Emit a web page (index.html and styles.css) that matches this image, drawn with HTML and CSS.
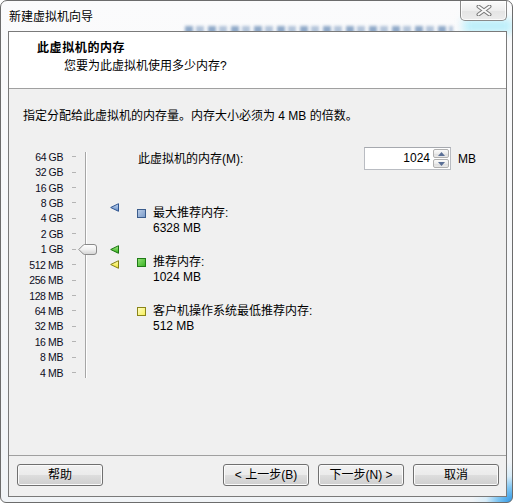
FILE: index.html
```html
<!DOCTYPE html>
<html lang="zh-CN">
<head>
<meta charset="utf-8">
<title>新建虚拟机向导</title>
<link rel="stylesheet" href="styles.css">
</head>
<body>
<div class="window">
  <div class="glass glass-text"></div>
  <div class="glass glass-glow"></div>
  <div class="titlebar">
    <span class="title">新建虚拟机向导</span>
    <button class="close" aria-label="关闭">
      <svg width="16" height="11" viewBox="0 0 16 11">
        <path d="M2.5 1.5 L13.5 9.5 M13.5 1.5 L2.5 9.5" stroke="#7b7b7b" stroke-width="4" stroke-linecap="round"/>
        <path d="M2.5 1.5 L13.5 9.5 M13.5 1.5 L2.5 9.5" stroke="#fbfbfb" stroke-width="2" stroke-linecap="round"/>
      </svg>
    </button>
  </div>
  <div class="client">
    <div class="header">
      <div class="header-title">此虚拟机的内存</div>
      <div class="header-sub">您要为此虚拟机使用多少内存?</div>
    </div>
    <div class="content">
      <p class="intro">指定分配给此虚拟机的内存量。内存大小必须为 4 MB 的倍数。</p>
      <div class="memory">
        <div class="scale">
          <div class="tick-row"><span class="tick-label">64 GB</span><span class="tick"></span></div>
          <div class="tick-row"><span class="tick-label">32 GB</span><span class="tick"></span></div>
          <div class="tick-row"><span class="tick-label">16 GB</span><span class="tick"></span></div>
          <div class="tick-row"><span class="tick-label">8 GB</span><span class="tick"></span></div>
          <div class="tick-row"><span class="tick-label">4 GB</span><span class="tick"></span></div>
          <div class="tick-row"><span class="tick-label">2 GB</span><span class="tick"></span></div>
          <div class="tick-row"><span class="tick-label">1 GB</span><span class="tick"></span></div>
          <div class="tick-row"><span class="tick-label">512 MB</span><span class="tick"></span></div>
          <div class="tick-row"><span class="tick-label">256 MB</span><span class="tick"></span></div>
          <div class="tick-row"><span class="tick-label">128 MB</span><span class="tick"></span></div>
          <div class="tick-row"><span class="tick-label">64 MB</span><span class="tick"></span></div>
          <div class="tick-row"><span class="tick-label">32 MB</span><span class="tick"></span></div>
          <div class="tick-row"><span class="tick-label">16 MB</span><span class="tick"></span></div>
          <div class="tick-row"><span class="tick-label">8 MB</span><span class="tick"></span></div>
          <div class="tick-row"><span class="tick-label">4 MB</span><span class="tick"></span></div>
        </div>
        <div class="track">
          <svg class="thumb" style="top:92px" width="19" height="11" viewBox="0 0 19 11">
            <defs>
              <linearGradient id="tg" x1="0" y1="0" x2="0" y2="1">
                <stop offset="0" stop-color="#ffffff"/>
                <stop offset="0.5" stop-color="#f0f0f0"/>
                <stop offset="1" stop-color="#d2d2d2"/>
              </linearGradient>
            </defs>
            <path d="M0.8 5.5 L5.3 1 Q5.8 0.5 6.5 0.5 H16 Q18.5 0.5 18.5 3 V8 Q18.5 10.5 16 10.5 H6.5 Q5.8 10.5 5.3 10 Z" fill="url(#tg)" stroke="#8a8a8a"/>
          </svg>
        </div>
        <div class="markers">
          <svg class="marker" style="top:56px" width="10" height="9" viewBox="0 0 10 9">
            <defs>
              <linearGradient id="mb" x1="0" y1="0" x2="0" y2="1">
                <stop offset="0" stop-color="#c9dbf3"/>
                <stop offset="1" stop-color="#5f88c4"/>
              </linearGradient>
            </defs>
            <path d="M0.7 4.5 L8.5 0.7 V8.3 Z" fill="url(#mb)" stroke="#2f5590" stroke-linejoin="round"/>
          </svg>
          <svg class="marker" style="top:98px" width="10" height="9" viewBox="0 0 10 9">
            <defs>
              <linearGradient id="mg" x1="0" y1="0" x2="0" y2="1">
                <stop offset="0" stop-color="#a8ec8a"/>
                <stop offset="1" stop-color="#2fae16"/>
              </linearGradient>
            </defs>
            <path d="M0.7 4.5 L8.5 0.7 V8.3 Z" fill="url(#mg)" stroke="#1a7410" stroke-linejoin="round"/>
          </svg>
          <svg class="marker" style="top:113px" width="10" height="9" viewBox="0 0 10 9">
            <defs>
              <linearGradient id="my" x1="0" y1="0" x2="0" y2="1">
                <stop offset="0" stop-color="#fffcb0"/>
                <stop offset="1" stop-color="#efe42c"/>
              </linearGradient>
            </defs>
            <path d="M0.7 4.5 L8.5 0.7 V8.3 Z" fill="url(#my)" stroke="#858014" stroke-linejoin="round"/>
          </svg>
        </div>
        <div class="details">
          <div class="amount-row">
            <label class="amount-label">此虚拟机的内存(M):</label>
            <div class="spinbox">
              <span class="spin-value">1024</span>
              <span class="spin-buttons">
                <span class="spin-btn">
                  <svg width="7" height="4" viewBox="0 0 7 4"><path d="M0 4 L3.5 0 L7 4 Z" fill="#5a6f96"/></svg>
                </span>
                <span class="spin-btn">
                  <svg width="7" height="4" viewBox="0 0 7 4"><path d="M0 0 L3.5 4 L7 0 Z" fill="#5a6f96"/></svg>
                </span>
              </span>
            </div>
            <span class="unit">MB</span>
          </div>
          <ul class="legend">
            <li class="legend-item"><span class="swatch swatch-max"></span><span class="legend-text">最大推荐内存:<br>6328 MB</span></li>
            <li class="legend-item"><span class="swatch swatch-rec"></span><span class="legend-text">推荐内存:<br>1024 MB</span></li>
            <li class="legend-item"><span class="swatch swatch-min"></span><span class="legend-text">客户机操作系统最低推荐内存:<br>512 MB</span></li>
          </ul>
        </div>
      </div>
    </div>
    <div class="footer">
      <button class="btn">帮助</button>
      <div class="nav-buttons">
        <button class="btn">&lt; 上一步(B)</button>
        <button class="btn">下一步(N) &gt;</button>
        <button class="btn">取消</button>
      </div>
    </div>
  </div>
</div>
</body>
</html>
```

FILE: styles.css
```css
* {
  box-sizing: border-box;
}

html, body {
  margin: 0;
  padding: 0;
  background: #ffffff;
}

body {
  width: 513px;
  height: 503px;
  overflow: hidden;
  font-family: "Liberation Sans", "Noto Sans CJK SC", sans-serif;
  font-size: 12px;
  color: #000;
}

.window {
  position: relative;
  width: 513px;
  height: 503px;
  border: 1px solid #6c6c6c;
  border-radius: 7px 7px 6px 6px;
  padding: 0 5px 5px 7px;
  display: flex;
  flex-direction: column;
  background:
    radial-gradient(circle at 100% 100%, #2f97e4 0, #7cc4f2 14px, rgba(200, 232, 250, 0.6) 26px, rgba(255,255,255,0) 40px),
    linear-gradient(#fbfbfc, #f1f4f7);
  overflow: hidden;
}

.glass {
  position: absolute;
  pointer-events: none;
}

.glass-text {
  left: 184px;
  top: 25px;
  width: 268px;
  height: 8px;
  background: repeating-linear-gradient(90deg, rgba(60, 105, 160, 0.75) 0 8px, rgba(255,255,255,0) 8px 11px, rgba(60, 105, 160, 0.5) 11px 19px, rgba(255,255,255,0) 19px 23px);
  filter: blur(1.6px);
  opacity: 0.75;
}

.glass-glow {
  left: 462px;
  top: 18px;
  width: 50px;
  height: 14px;
  background: rgba(170, 235, 250, 0.8);
  filter: blur(4px);
}

.titlebar {
  position: relative;
  height: 30px;
  display: flex;
  align-items: flex-start;
  padding-left: 1px;
}

.title {
  padding-top: 8px;
  line-height: 16px;
  font-size: 12px;
  text-shadow: 0 0 6px #ffffff, 0 0 3px #ffffff;
}

.close {
  margin-left: auto;
  margin-top: -1px;
  width: 47px;
  height: 21px;
  padding: 0;
  border: 1px solid #8a8a8a;
  border-top-color: #a4a4a4;
  border-radius: 0 0 5px 5px;
  background: linear-gradient(#fbfbfb, #eeeeee 50%, #e4e4e4 51%, #ececec);
  box-shadow: inset 0 0 0 1px rgba(255,255,255,0.8);
  display: flex;
  align-items: center;
  justify-content: center;
}

.close svg {
  display: block;
  margin-top: -1px;
}

.client {
  position: relative;
  flex: 1;
  border: 1px solid #7a7a7a;
  background: #f0f0f0;
  display: flex;
  flex-direction: column;
}

.header {
  height: 57px;
  background: #ffffff;
  border-bottom: 1px solid #a0a0a0;
  padding-top: 7px;
}

.header-title {
  font-weight: bold;
  line-height: 18px;
  padding-left: 28px;
  letter-spacing: 0.6px;
}

.header-sub {
  line-height: 18px;
  padding-left: 55px;
}

.content {
  flex: 1;
  padding: 19px 0 0 14px;
}

.intro {
  margin: 0;
  line-height: 16px;
}

.memory {
  display: flex;
  align-items: flex-start;
  margin-top: 23px;
}

.scale {
  padding-top: 2px;
  display: flex;
  flex-direction: column;
}

.tick-row {
  height: 15.43px;
  display: flex;
  align-items: center;
}

.tick-label {
  width: 40px;
  text-align: right;
  font-size: 10.5px;
  letter-spacing: -0.4px;
  line-height: 12px;
  color: #0c0c1c;
}

.tick {
  width: 4px;
  height: 1px;
  margin-left: 9px;
  background: #b4b4b4;
}

.track {
  position: relative;
  margin-left: 9px;
  margin-top: 5px;
  width: 2px;
  height: 226px;
  border-left: 1px solid #a6a6a6;
  border-right: 1px solid #ffffff;
}

.thumb {
  position: absolute;
  left: -8px;
  display: block;
}

.markers {
  position: relative;
  margin-left: 23px;
  width: 10px;
  height: 1px;
}

.marker {
  position: absolute;
  left: 0;
  display: block;
}

.details {
  margin-left: 17px;
}

.amount-row {
  display: flex;
  align-items: center;
  height: 23px;
}

.amount-label {
  width: 227px;
  padding-left: 1px;
  line-height: 16px;
  margin-top: 1px;
}

.spinbox {
  width: 87px;
  height: 23px;
  display: flex;
  border: 1px solid #b9bcc2;
  border-top-color: #a6a9af;
  background: #ffffff;
}

.spin-value {
  flex: 1;
  text-align: right;
  padding-right: 3px;
  line-height: 21px;
}

.spin-buttons {
  width: 17px;
  display: flex;
  flex-direction: column;
  gap: 1px;
  padding: 1px 1px 1px 0;
}

.spin-btn {
  flex: 1;
  border: 1px solid #b0b0b0;
  border-radius: 2px;
  background: linear-gradient(#fbfbfb, #ececec 50%, #dedede 51%, #e8e8e8);
  display: flex;
  align-items: center;
  justify-content: center;
}

.spin-btn svg {
  display: block;
}

.unit {
  margin-left: 7px;
  line-height: 16px;
}

.legend {
  list-style: none;
  margin: 36px 0 0 0;
  padding: 0;
  display: flex;
  flex-direction: column;
  gap: 19px;
}

.legend-item {
  display: flex;
  align-items: flex-start;
}

.swatch {
  width: 9px;
  height: 9px;
  margin-top: 3px;
  border: 1px solid;
}

.swatch-max {
  border-color: #3b5c8c;
  background: linear-gradient(135deg, #b8cbe6, #7c9cc9);
}

.swatch-rec {
  border-color: #1f7a16;
  background: linear-gradient(135deg, #8ee072, #3cb326);
}

.swatch-min {
  border-color: #8a8419;
  background: linear-gradient(135deg, #fffdc0, #f6ef5c);
}

.legend-text {
  margin-left: 7px;
  line-height: 15px;
}

.footer {
  height: 41px;
  border-top: 1px solid #a0a0a0;
  padding: 8px 7px 0 8px;
  display: flex;
  align-items: flex-start;
}

.nav-buttons {
  margin-left: auto;
  display: flex;
  gap: 9px;
}

.btn {
  width: 86px;
  height: 22px;
  padding: 0;
  border: 1px solid #707070;
  border-radius: 3px;
  background: linear-gradient(#f2f2f2 0%, #ebebeb 48%, #dddddd 52%, #cfcfcf 100%);
  box-shadow: inset 0 0 0 1px #fbfbfb;
  font-family: "Liberation Sans", "Noto Sans CJK SC", sans-serif;
  font-size: 12px;
  line-height: 18px;
  color: #000;
}
```
